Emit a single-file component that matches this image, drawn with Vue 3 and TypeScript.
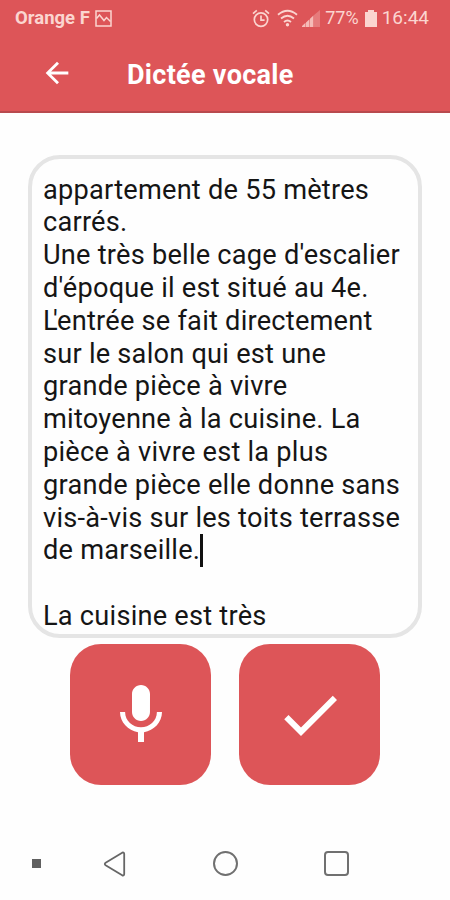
<script setup lang="ts">
const lines: string[] = [
  'appartement de 55 mètres',
  'carrés.',
  "Une très belle cage d'escalier",
  "d'époque il est situé au 4e.",
  "L'entrée se fait directement",
  'sur le salon qui est une',
  'grande pièce à vivre',
  'mitoyenne à la cuisine. La',
  'pièce à vivre est la plus',
  'grande pièce elle donne sans',
  'vis-à-vis sur les toits terrasse',
  'de marseille.',
  '',
  'La cuisine est très',
]
const caretLine = 11
</script>

<template>
  <div class="screen">
    <header class="header">
      <div class="status">
        <span class="carrier">Orange F</span>
        <svg class="picture" width="17" height="17" viewBox="0 0 17 17" fill="none" stroke="currentColor" stroke-width="1.5">
          <rect x="1" y="1" width="15" height="15" />
          <path d="M1.500 8.500l3-3.500 4.500 5.500 2.500-3 4 4" />
        </svg>
        <div class="indicators">
          <svg class="alarm" width="18" height="19" viewBox="0 0 18 19" fill="none" stroke="currentColor" stroke-width="1.7">
            <circle cx="9" cy="10.6" r="6.7" />
            <path d="M9 6.5v4.6h3.6M1 4.6L4.8 1.4M17 4.6l-3.8-3.2" />
          </svg>
          <svg class="wifi" width="21" height="18" viewBox="0 0 21 18" fill="none" stroke="currentColor" stroke-width="1.8">
            <path d="M1 5.8Q10.5-2.2 20 5.8M4 9.5Q10.5 4 17 9.5M7 13Q10.5 10 14 13" />
            <circle cx="10.5" cy="15.8" r="1.7" fill="currentColor" stroke="none" />
          </svg>
          <svg class="signal" width="18" height="17" viewBox="0 0 18 17" fill="currentColor">
            <path d="M0 17v-1L3.500 12.800V17zM4 17v-4.600L7.500 9.200V17zM8 17V8.800l3.200-3V17z" opacity=".8" />
            <path d="M11.200 17V5.800L18 0v17z" opacity=".3" />
          </svg>
          <span class="percent">77%</span>
          <svg class="battery" width="12" height="17" viewBox="0 0 12 17" fill="currentColor">
            <path d="M3 0h6v2h3v15H0V2h3z" />
          </svg>
          <span class="clock">16:44</span>
        </div>
      </div>
      <div class="toolbar">
        <svg class="back" width="34" height="34" viewBox="0 0 24 24" fill="currentColor">
          <path d="M20 11H7.830l5.590-5.590L12 4l-8 8 8 8 1.410-1.410L7.830 13H20v-2z" />
        </svg>
        <h1 class="title">Dictée vocale</h1>
      </div>
    </header>

    <main class="content">
      <div class="card">
        <div class="text">
          <div v-for="(line, i) in lines" :key="i" class="line">
            <span v-if="line.startsWith('L\'')"><span class="tight">L</span>{{ line.slice(1) }}</span>
            <span v-else>{{ line }}</span>
            <i v-if="i === caretLine" class="caret"></i>
          </div>
        </div>
      </div>
      <div class="actions">
        <button class="action" type="button" aria-label="Micro">
          <svg width="72" height="72" viewBox="0 0 24 24" fill="currentColor">
            <path d="M12 14c1.660 0 2.990-1.340 2.990-3L15 5c0-1.660-1.340-3-3-3S9 3.340 9 5v6c0 1.660 1.340 3 3 3zm5.300-3c0 3-2.540 5.100-5.300 5.100S6.700 14 6.700 11H5c0 3.410 2.720 6.230 6 6.720V21h2v-3.280c3.280-.48 6-3.300 6-6.720h-1.700z" />
          </svg>
        </button>
        <button class="action" type="button" aria-label="Valider">
          <svg width="72" height="72" viewBox="0 0 24 24" fill="currentColor">
            <path d="M9 16.170L4.830 12l-1.420 1.410L9 19 21 7l-1.410-1.410z" />
          </svg>
        </button>
      </div>
    </main>

    <nav class="navbar">
      <span class="dot"></span>
      <svg class="tri" width="24" height="26" viewBox="0 0 24 26" fill="none" stroke="currentColor" stroke-width="1.8" stroke-linejoin="round">
        <path d="M2.600 11.700L19.200 1.700Q21.200 1 21.200 3v20q0 2-2 1.300L2.600 14.300q-1.600-1.300 0-2.600z" />
      </svg>
      <span class="circle"></span>
      <span class="square"></span>
    </nav>
  </div>
</template>

<style>
body {
  margin: 0;
  background: #fefefe;
}
</style>

<style scoped>
.screen {
  width: 450px;
  height: 900px;
  display: flex;
  flex-direction: column;
  overflow: hidden;
  background: #fefefe;
  font-family: Roboto, 'Liberation Sans', sans-serif;
}
.header {
  height: 113px;
  box-sizing: border-box;
  background: #dd5558;
  border-bottom: 2px solid #b84a4e;
  color: #fff;
}
.status {
  display: flex;
  align-items: center;
  height: 36px;
  padding: 0 21px 0 15px;
  color: #fbd5d0;
  font-size: 18px;
  line-height: 36px;
}
.carrier {
  font-weight: 700;
  font-size: 18.500px;
}
.picture {
  margin-left: 5px;
}
.indicators {
  display: flex;
  align-items: center;
  margin-left: auto;
}
.wifi {
  margin-left: 7px;
}
.signal {
  margin-left: 4px;
}
.percent {
  margin-left: 5px;
}
.battery {
  margin-left: 6px;
}
.clock {
  margin-left: 5px;
  font-size: 19px;
}
.toolbar {
  display: flex;
  align-items: center;
  height: 74px;
  padding-left: 40px;
}
.title {
  margin: 3px 0 0 53px;
  font-size: 27px;
  line-height: 32px;
  font-weight: 700;
  letter-spacing: 0.3px;
}
.content {
  display: flex;
  flex-direction: column;
  align-items: center;
  padding-top: 42px;
}
.card {
  width: 394px;
  height: 483px;
  box-sizing: border-box;
  border: 4px solid #e5e5e5;
  border-radius: 32px;
  padding: 14.600px 10px 8px 11px;
}
.text {
  height: 451px;
  overflow: hidden;
  color: #151515;
  font-size: 27.200px;
  letter-spacing: 0.230px;
}
.line {
  display: flex;
  height: 32.800px;
  line-height: 32.800px;
  white-space: pre;
}
.tight {
  margin-right: -5px;
}
.caret {
  width: 3px;
  height: 33px;
  background: #111;
}
.actions {
  display: flex;
  gap: 28px;
  margin-top: 6px;
}
.action {
  display: flex;
  align-items: center;
  justify-content: center;
  width: 141px;
  height: 141px;
  padding: 0;
  border: 0;
  border-radius: 31px;
  background: #dd5558;
  color: #fff;
}
.navbar {
  display: flex;
  align-items: center;
  height: 73px;
  margin-top: auto;
  padding: 0 0 0 32px;
  color: #666;
}
.dot {
  width: 9px;
  height: 9px;
  background: #606060;
}
.tri {
  margin-left: 62px;
}
.circle,
.square {
  width: 25px;
  height: 25px;
  box-sizing: border-box;
  border: 2px solid #707070;
}
.circle {
  margin-left: 86px;
  border-radius: 50%;
}
.square {
  margin-left: 86px;
  border-radius: 4px;
}
</style>
